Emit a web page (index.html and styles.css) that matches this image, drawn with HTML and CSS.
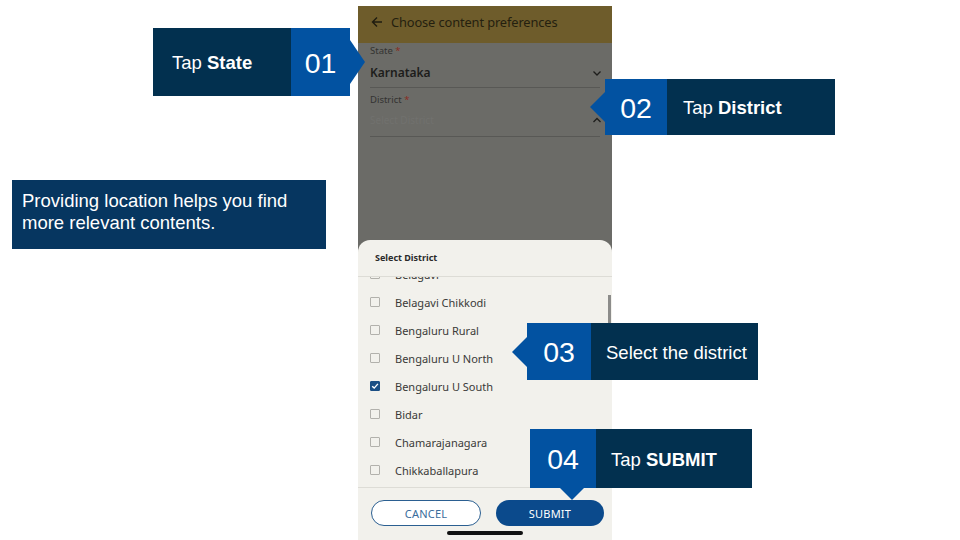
FILE: index.html
```html
<!DOCTYPE html>
<html>
<head>
<meta charset="utf-8">
<link rel="stylesheet" href="styles.css">
</head>
<body>
<div class="slide">
  <div class="phone">
    <div class="appbar">
      <svg class="back" width="12" height="12" viewBox="0 0 12 12"><path d="M11 6H1.8M6 1.5L1.5 6L6 10.5" fill="none" stroke="#1f1c10" stroke-width="1.4"/></svg>
      <span class="apptitle">Choose content preferences</span>
    </div>
    <div class="form">
      <div class="field">
        <div class="flabel">State <span class="req">*</span></div>
        <div class="fvalue">
          <span>Karnataka</span>
          <svg width="10" height="8" viewBox="0 0 10 8"><path d="M1.5 2.5L5 6L8.5 2.5" fill="none" stroke="#1e1e1c" stroke-width="1.3"/></svg>
        </div>
      </div>
      <div class="field">
        <div class="flabel">District <span class="req">*</span></div>
        <div class="fvalue">
          <span class="placeholder">Select District</span>
          <svg width="10" height="8" viewBox="0 0 10 8"><path d="M1.5 6L5 2.5L8.5 6" fill="none" stroke="#1e1e1c" stroke-width="1.3"/></svg>
        </div>
      </div>
    </div>
    <div class="sheet">
      <div class="sheet-title">Select District</div>
      <div class="list-wrap">
        <ul class="list">
          <li><span class="cb"></span>Belagavi</li>
          <li><span class="cb"></span>Belagavi Chikkodi</li>
          <li><span class="cb"></span>Bengaluru Rural</li>
          <li><span class="cb"></span>Bengaluru U North</li>
          <li><span class="cb checked"><svg width="10" height="10" viewBox="0 0 10 10"><path d="M2.2 5.2L4.2 7.1L7.9 2.9" fill="none" stroke="#fff" stroke-width="1.4"/></svg></span>Bengaluru U South</li>
          <li><span class="cb"></span>Bidar</li>
          <li><span class="cb"></span>Chamarajanagara</li>
          <li><span class="cb"></span>Chikkaballapura</li>
        </ul>
        <div class="scrollbar"></div>
      </div>
      <div class="footer">
        <button class="btn cancel">CANCEL</button>
        <button class="btn submit">SUBMIT</button>
      </div>
      <div class="home"></div>
    </div>
  </div>

  <div class="callout c1">
    <div class="label"><span>Tap <b>State</b></span></div>
    <div class="num arrow-right">01</div>
  </div>
  <div class="callout c2">
    <div class="num arrow-left">02</div>
    <div class="label"><span>Tap <b>District</b></span></div>
  </div>
  <div class="callout c3">
    <div class="num arrow-left">03</div>
    <div class="label"><span>Select the district</span></div>
  </div>
  <div class="callout c4">
    <div class="num arrow-down">04</div>
    <div class="label"><span>Tap <b>SUBMIT</b></span></div>
  </div>
  <div class="info">Providing location helps you find more relevant contents.</div>
</div>
</body>
</html>
```
FILE: styles.css
```css
* { box-sizing: border-box; }
html, body { margin: 0; padding: 0; }
body { background: #fff; }
.slide {
  position: relative;
  width: 960px;
  height: 540px;
  overflow: hidden;
  background: #fff;
  font-family: "Liberation Sans", Arial, sans-serif;
}

/* phone */
.phone {
  position: absolute;
  left: 358px;
  top: 6px;
  width: 254px;
  height: 534px;
  background: #6b6b67;
  font-family: "Noto Sans", "Open Sans", sans-serif;
  display: flex;
  flex-direction: column;
  overflow: hidden;
}
.appbar {
  height: 37px;
  background: #6e5c2b;
  display: flex;
  align-items: center;
  padding-left: 13px;
  padding-bottom: 5px;
  gap: 8px;
}
.back { flex: none; }
.apptitle {
  font-size: 12.8px;
  color: #24200f;
  letter-spacing: -0.1px;
}
.form {
  padding: 1px 12px 0 12px;
}
.field {
  border-bottom: 1px solid #585855;
  height: 44px;
  display: flex;
  flex-direction: column;
}
.field + .field { height: 49px; }
.flabel {
  font-size: 9.5px;
  color: #333331;
  height: 13px;
  line-height: 13px;
}
.field + .field .flabel { margin-top: 5px; }
.req { color: #8a2b22; }
.fvalue {
  display: flex;
  justify-content: space-between;
  align-items: center;
  margin-right: -2px;
  margin-top: 7px;
  font-size: 12px;
  font-weight: 600;
  color: #1d1d1b;
}
.placeholder {
  font-weight: 400;
  font-size: 10px;
  color: #71716e;
}

/* bottom sheet */
.sheet {
  margin-top: auto;
  height: 300px;
  background: #f2f1ec;
  border-radius: 12px 12px 0 0;
  display: flex;
  flex-direction: column;
}
.sheet-title {
  height: 37px;
  border-bottom: 1px solid #dddcd6;
  font-size: 9px;
  font-weight: 700;
  color: #2a2a2a;
  padding-left: 17px;
  display: flex;
  align-items: center;
  padding-bottom: 1px;
}
.list-wrap {
  position: relative;
  height: 210px;
  overflow: hidden;
  flex: none;
}
.list {
  list-style: none;
  margin: -17px 0 0 0;
  padding: 0;
}
.list li {
  height: 28px;
  display: flex;
  align-items: center;
  padding-left: 12px;
  font-size: 11px;
  color: #3a3a38;
}
.cb {
  width: 10px;
  height: 10px;
  border: 1px solid #b2b1ac;
  border-radius: 1px;
  margin-right: 15px;
  flex: none;
  display: flex;
  align-items: center;
  justify-content: center;
}
.cb.checked {
  background: #1b4f84;
  border-color: #1b4f84;
}
.cb svg { flex: none; }
.scrollbar {
  position: absolute;
  right: 1px;
  top: 18px;
  width: 3px;
  height: 32px;
  background: #8c8c8a;
}
.footer {
  border-top: 1px solid #dddcd6;
  flex: none;
  height: 40px;
  display: flex;
  align-items: flex-start;
  gap: 15px;
  padding: 12px 8px 0 13px;
}
.btn {
  height: 26px;
  border-radius: 13px;
  font-family: "Noto Sans", "Open Sans", sans-serif;
  font-size: 11px;
  letter-spacing: 0.2px;
  padding: 0;
}
.cancel {
  width: 110px;
  background: #fff;
  border: 1.5px solid #2b5f91;
  color: #3a6c9c;
}
.submit {
  width: 108px;
  background: #0b4a8c;
  border: none;
  color: #fff;
}
.home {
  width: 76px;
  height: 4px;
  border-radius: 2px;
  background: #111;
  margin: 4px auto 0;
  flex: none;
}

/* callouts */
.callout {
  position: absolute;
  display: flex;
  color: #fff;
}
.callout .label {
  background: #02304f;
  display: flex;
  align-items: center;
  font-size: 18.5px;
  padding-left: 16px;
  padding-top: 2px;
  white-space: nowrap;
}
.callout .num {
  position: relative;
  background: #0252a1;
  display: flex;
  align-items: center;
  justify-content: center;
  font-size: 28.5px;
  padding-top: 2px;
}
.arrow-right::after,
.arrow-left::before,
.arrow-down::after {
  content: "";
  position: absolute;
  width: 0;
  height: 0;
}
.arrow-right::after {
  left: 100%;
  top: 50%;
  margin-top: -22px;
  border-top: 22px solid transparent;
  border-bottom: 22px solid transparent;
  border-left: 15px solid #0252a1;
}
.arrow-left::before {
  right: 100%;
  top: 50%;
  margin-top: -15px;
  border-top: 15px solid transparent;
  border-bottom: 15px solid transparent;
  border-right: 15px solid #0252a1;
}
.arrow-down::after {
  top: 100%;
  left: 30px;
  border-left: 12px solid transparent;
  border-right: 12px solid transparent;
  border-top: 12px solid #0252a1;
}
.c1 { left: 153px; top: 28px; height: 68px; }
.c1 .label { width: 138px; padding-left: 19px; }
.c1 .num { width: 59px; }
.c2 { left: 605px; top: 79px; height: 56px; }
.c2 .num { width: 62px; }
.c2 .label { width: 168px; }
.c3 { left: 527px; top: 323px; height: 57px; }
.c3 .num { width: 64px; }
.c3 .label { width: 167px; padding-left: 15px; }
.c4 { left: 530px; top: 429px; height: 59px; }
.c4 .num { width: 66px; }
.c4 .label { width: 156px; padding-left: 15px; }

.info {
  position: absolute;
  left: 12px;
  top: 180px;
  width: 314px;
  height: 69px;
  background: #063660;
  color: #fff;
  font-size: 18.5px;
  line-height: 22px;
  padding: 10px 10px 0 10px;
}
```
